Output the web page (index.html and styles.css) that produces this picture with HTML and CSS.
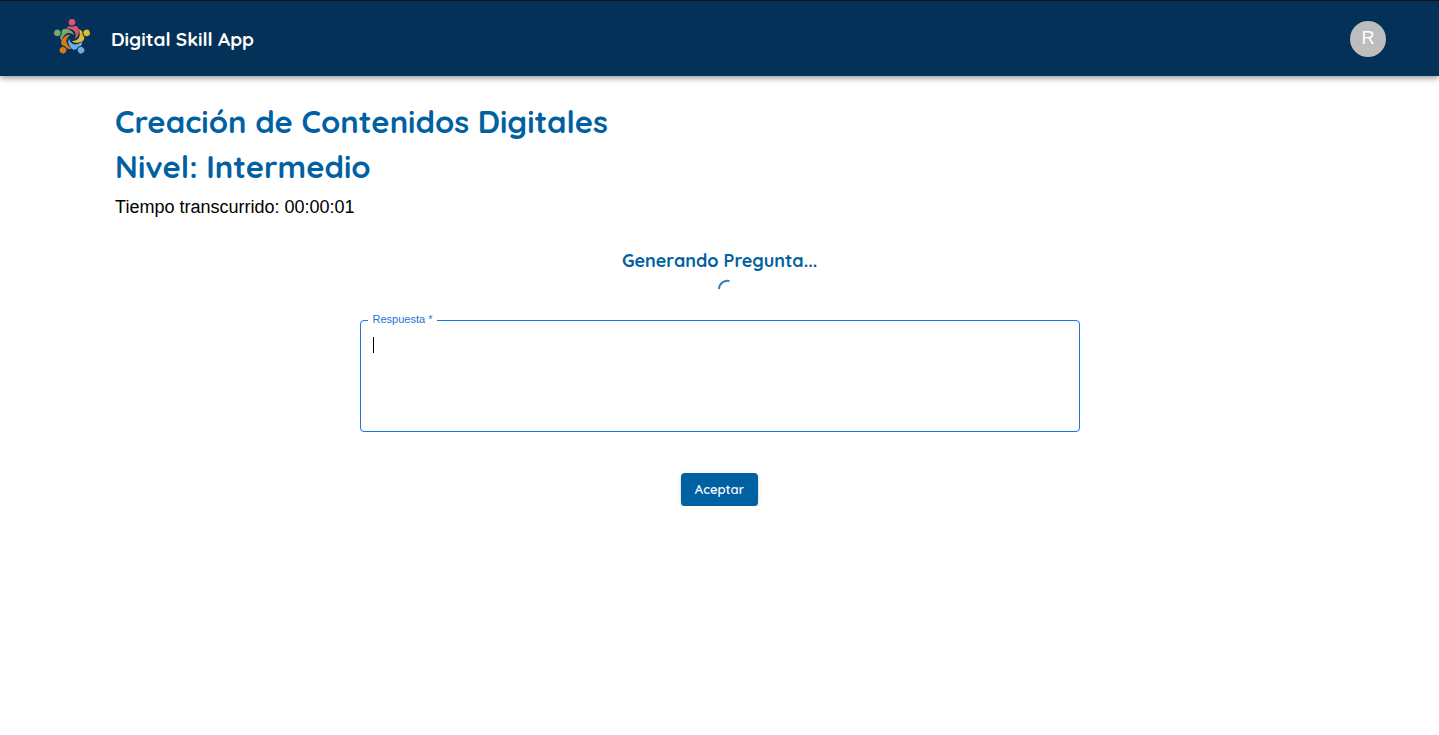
FILE: index.html
```html
<!DOCTYPE html>
<html lang="es">
<head>
<meta charset="utf-8">
<meta name="viewport" content="width=device-width, initial-scale=1">
<title>Digital Skill App</title>
<link rel="stylesheet" href="styles.css">
</head>
<body>
<header class="topbar">
  <a class="brand" href="#">
    <svg class="logo" viewBox="6 7 36 40" aria-hidden="true">
      <defs>
        <g id="person">
          <circle cx="24" cy="10.3" r="3.3"/>
          <path d="M18.2 16.6C19.6 14 21.8 13.6 24 14.8C26 14.2 27.4 13.6 28.8 14.3C30.6 15.5 31.2 17.8 30.8 20.6C30.4 23.4 29.4 25.6 27 27C28.2 23.6 28 20.4 25.6 18.6C23.3 17 20.7 16.5 18.2 16.6Z"/>
        </g>
      </defs>
      <use href="#person" fill="#dc5472"/>
      <use href="#person" fill="#dfb92f" transform="rotate(72 24 25.7)"/>
      <use href="#person" fill="#6fade2" transform="rotate(144 24 25.7)"/>
      <use href="#person" fill="#d97a18" transform="rotate(216 24 25.7)"/>
      <use href="#person" fill="#79a766" transform="rotate(288 24 25.7)"/>
    </svg>
    <span class="brand-name">Digital Skill App</span>
  </a>
  <button class="avatar" type="button" aria-label="Cuenta de R">R</button>
</header>
<main class="content">
  <h1 class="title">Creación de Contenidos Digitales</h1>
  <h2 class="title">Nivel: Intermedio</h2>
  <p class="timer">Tiempo transcurrido: 00:00:01</p>
  <form class="question">
    <h3 class="status">Generando Pregunta...</h3>
    <svg class="spinner" viewBox="0 0 36 20" role="img" aria-label="Cargando"><path d="M17 10A8.5 8.5 0 0 1 27.500 2" /></svg>
    <div class="field">
      <label class="field-label" for="answer">Respuesta *</label>
      <textarea class="field-input" id="answer" rows="4" required></textarea>
      <span class="caret"></span>
    </div>
    <button class="submit" type="submit">Aceptar</button>
  </form>
</main>
</body>
</html>
```
FILE: styles.css
```css
* { box-sizing: border-box; }

body {
  margin: 0;
  background: #fff;
  color: #000;
  font-family: "Liberation Sans", Arial, sans-serif;
}

.topbar {
  display: flex;
  align-items: center;
  justify-content: space-between;
  height: 76px;
  padding: 0 53px 0 54px;
  border-top: 1px solid #111;
  background: #033157;
  box-shadow: 0 2px 4px -1px rgba(0, 0, 0, .2), 0 4px 5px rgba(0, 0, 0, .14), 0 1px 10px rgba(0, 0, 0, .12);
}

.brand {
  display: flex;
  align-items: center;
  gap: 21px;
  color: #fff;
  text-decoration: none;
}

.logo { width: 36px; height: 40px; }

.brand-name, .title, .status, .submit {
  font-family: Quicksand, Lato, sans-serif;
}

.brand-name { font-size: 19px; font-weight: 700; }

.avatar {
  width: 36px;
  height: 36px;
  padding: 0;
  border: 0;
  border-radius: 50%;
  background: #bdbdbd;
  color: #fff;
  font: 18px "Liberation Sans", Arial, sans-serif;
}

.content { padding: 23px 8% 0; }

.title {
  margin: 0;
  color: #0061a2;
  font-size: 31px;
  font-weight: 700;
  line-height: 45px;
}

.timer { margin: 6px 0 0; font-size: 18px; line-height: 24px; }

.question {
  display: flex;
  flex-direction: column;
  align-items: center;
  margin-top: 30px;
}

.status {
  margin: 0;
  color: #0061a2;
  font-size: 18px;
  font-weight: 700;
  line-height: 24px;
}

.spinner { width: 36px; height: 20px; margin-top: 6px; }
.spinner path { fill: none; stroke: #347fb9; stroke-width: 2; }

.field {
  position: relative;
  width: 720px;
  max-width: 100%;
  margin-top: 21px;
}

.field-label {
  position: absolute;
  top: -8px;
  left: 8px;
  padding: 0 5px;
  background: #fff;
  color: #1976d2;
  font-size: 11px;
  line-height: 14px;
}

.field-input {
  display: block;
  width: 100%;
  height: 112px;
  padding: 14px 12px;
  border: 1px solid #1976d2;
  border-radius: 4px;
  outline: 0;
  resize: none;
  font: 14px/20px "Liberation Sans", Arial, sans-serif;
}

.caret {
  position: absolute;
  top: 17px;
  left: 13px;
  width: 1px;
  height: 16px;
  background: #000;
}

.submit {
  margin-top: 41px;
  padding: 0 14px;
  border: 0;
  border-radius: 4px;
  background: #0061a2;
  color: #fff;
  font-size: 13px;
  font-weight: 600;
  line-height: 33px;
  box-shadow: 0 3px 1px -2px rgba(0, 0, 0, .2), 0 2px 2px rgba(0, 0, 0, .14), 0 1px 5px rgba(0, 0, 0, .12);
}
```
